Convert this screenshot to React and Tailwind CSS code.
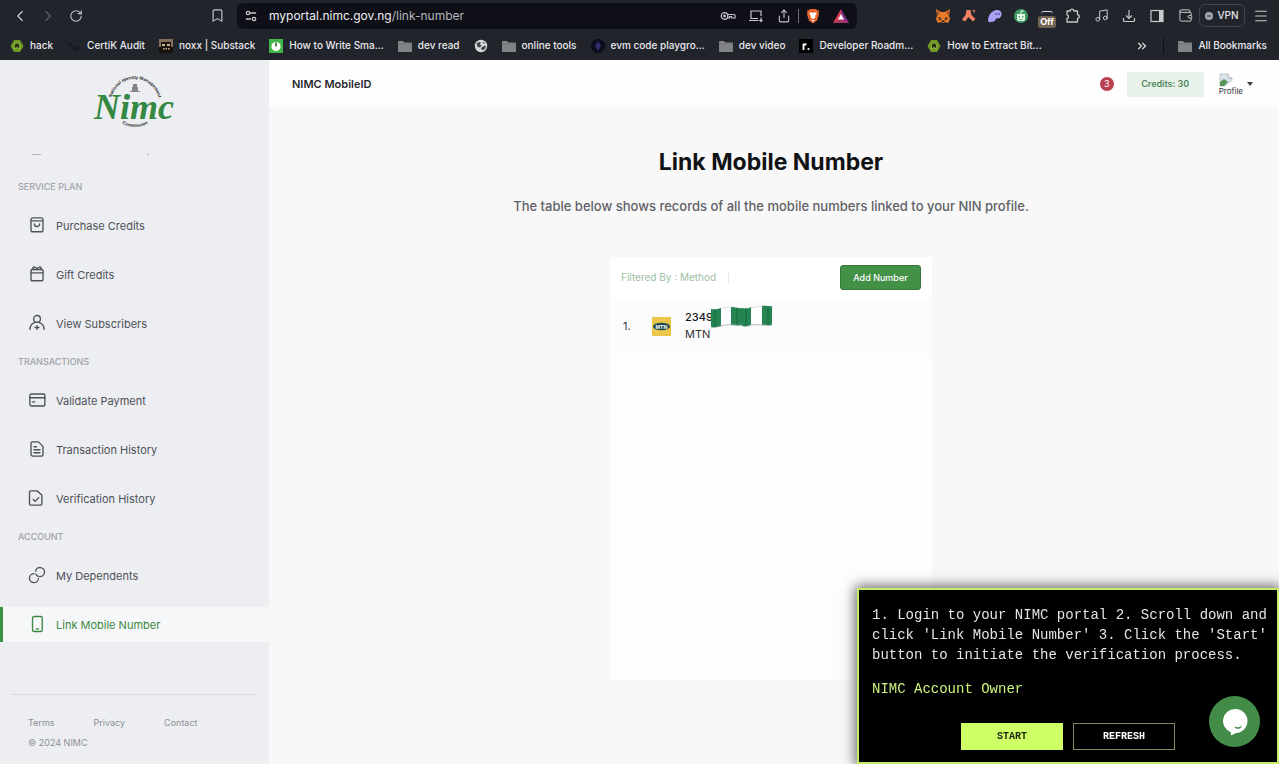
import React from 'react';
import {
  ChevronLeft, ChevronRight, RotateCw, Bookmark, Share, Music,
  Wallet, Menu, ChevronsRight,
} from 'lucide-react';

const stroke = { fill: 'none', stroke: 'currentColor', strokeWidth: 1.8, strokeLinecap: 'round', strokeLinejoin: 'round' };

function Icon({ children, className = 'size-[18px]' }) {
  return <svg viewBox="0 0 24 24" className={className} {...stroke} aria-hidden="true">{children}</svg>;
}

const icons = {
  bag: <><rect x="4" y="2.500" width="16" height="18.500" rx="2.500" /><path d="M4.500 6.500h15" /><path d="M8.500 10.500a3.500 3.500 0 0 0 7 0" /></>,
  gift: <><rect x="4" y="6" width="16" height="15" rx="1.500" /><path d="M4 10.500h16M12 6c-1-4-5-4-5.500-2-.3 1.300 1 2 2 2M12 6c1-4 5-4 5.500-2 .3 1.300-1 2-2 2" /></>,
  user: <><circle cx="12" cy="6.500" r="4.500" /><path d="M2.500 20.500c.3-5 3-8 6.500-9M21.500 20.500c-.3-5-3-8-6.500-9M12 15.500v5M9.500 18h5" /></>,
  card: <><rect x="2.500" y="4" width="20" height="16" rx="2" /><path d="M2.500 9h20M6 14.500h3" /></>,
  doc: <><path d="M6 2.500h8l6 6V19a2.500 2.500 0 0 1-2.500 2.500h-11A2.500 2.500 0 0 1 4 19V4.500a2 2 0 0 1 2-2Z" /><path d="M8 9h3.500M8 13h8M8 17h8" /></>,
  check: <><path d="M4 2.500h8l6.500 5.500v11.500a2 2 0 0 1-2 2H4a2 2 0 0 1-2-2v-15a2 2 0 0 1 2-2Z" /><path d="m7 14 2.500 2.500 5-5" /></>,
  link: <><path d="M10.100 7A6 6 0 1 1 15.500 14" /><path d="M8 10.200A6 6 0 1 0 13.900 17" /><path d="m10.500 11 3 3" /></>,
  phone: <><rect x="6" y="2" width="13" height="20" rx="2" /><path d="M11 18.500h3" /></>,
};

const sections = [
  { title: 'SERVICE PLAN', items: [['Purchase Credits', 'bag'], ['Gift Credits', 'gift'], ['View Subscribers', 'user']] },
  { title: 'TRANSACTIONS', items: [['Validate Payment', 'card'], ['Transaction History', 'doc'], ['Verification History', 'check']] },
  { title: 'ACCOUNT', items: [['My Dependents', 'link'], ['Link Mobile Number', 'phone']] },
];

const Folder = () => (
  <svg viewBox="0 0 14 14" className="size-3.5" aria-hidden="true">
    <path d="M0 3a1 1 0 0 1 1-1h4l1.500 1.500H13a1 1 0 0 1 1 1V12a1 1 0 0 1-1 1H1a1 1 0 0 1-1-1Z" fill="#838487" />
    <path d="M0 5h14" stroke="#6d6e71" strokeWidth=".6" />
  </svg>
);
const Hex = () => (
  <svg viewBox="0 0 14 14" className="size-3.5" aria-hidden="true">
    <path d="M4 1h6l3.500 6L10 13H4L.5 7Z" fill="#6f9a22" />
    <path d="M4.300 10V6.500a2.700 2.700 0 0 1 5.400 0V10L7 8.500Z" fill="#25320f" stroke="#a9cf58" strokeWidth=".8" />
  </svg>
);
const Audit = () => (
  <svg viewBox="0 0 14 14" className="size-3.5" aria-hidden="true">
    <path d="M2 4 8 11 12 8" fill="none" stroke="#1a1b21" strokeWidth="2.500" />
  </svg>
);
const Pixel = () => (
  <svg viewBox="0 0 14 14" className="size-3.5" aria-hidden="true">
    <path d="M0 0h14v14H0Z" fill="#17120e" />
    <path d="M0 0h14v3H0ZM0 3h2v5H0ZM12 3h2v5h-2Z" fill="#82705a" />
    <path d="M3 5h3v2H3ZM8 5h3v2H8ZM4 9h1.500v1.500H4ZM6.500 9H8v1.500H6.500ZM9 9h1.500v1.500H9Z" fill="#c9b48d" />
  </svg>
);
const Clock = () => (
  <svg viewBox="0 0 14 14" className="size-3.5" aria-hidden="true">
    <path d="M0 0h14v14H0Z" fill="#43b649" />
    <circle cx="7" cy="7.500" r="4.600" fill="#fff" />
    <path d="M7 3.500v4" stroke="#23702a" strokeWidth="1.600" />
  </svg>
);
const Evm = () => (
  <svg viewBox="0 0 14 14" className="size-3.5" aria-hidden="true">
    <circle cx="7" cy="7" r="7" fill="#0b0c1c" />
    <path d="m7 2 3 5-3 5-3-5Z" fill="#2e2f68" />
  </svg>
);
const Earth = () => (
  <svg viewBox="0 0 14 14" className="size-3.5" aria-hidden="true">
    <circle cx="7" cy="7" r="6.200" fill="#d6d7d9" />
    <path d="M2.500 4.500 5 3l2 .5-1 2 1.500 1L6 8.500 3.500 8ZM8 8l3-1.500 1 1-1.500 3-2.500.5-1-1.500ZM9 2.500l2 1.500-1.500 1Z" fill="#45474d" />
  </svg>
);
const Roadmap = () => (
  <svg viewBox="0 0 14 14" className="size-3.5" aria-hidden="true">
    <path d="M0 0h14v14H0Z" fill="#000" />
    <path d="M4.500 11V4.500M4.500 7.500c0-1.700 1.200-2.400 3-2.200" fill="none" stroke="#fff" strokeWidth="1.800" />
    <circle cx="9.500" cy="10" r="1.100" fill="#fff" />
  </svg>
);

const bookmarks = [
  [Hex, 'hack'], [Audit, 'CertiK Audit'], [Pixel, 'noxx | Substack'], [Clock, 'How to Write Sma...'],
  [Folder, 'dev read'], [Earth, ''], [Folder, 'online tools'], [Evm, 'evm code playgro...'],
  [Folder, 'dev video'], [Roadmap, 'Developer Roadm...'], [Hex, 'How to Extract Bit...'],
];

function ToolButton({ label, children }) {
  return <button type="button" aria-label={label} className="flex size-4 shrink-0 items-center justify-center">{children}</button>;
}

function BrowserBar() {
  return (
    <div className="bg-[#22242b] text-[#c7c8cc]">
      <div className="flex h-[31px] items-center">
        <div className="flex w-[237px] shrink-0 items-center gap-3 pl-3">
          <ToolButton label="Back"><ChevronLeft size={18} strokeWidth={1.700} className="shrink-0" /></ToolButton>
          <ToolButton label="Forward"><ChevronRight size={18} strokeWidth={1.700} className="shrink-0 text-[#5d5f66]" /></ToolButton>
          <ToolButton label="Reload"><RotateCw size={14} strokeWidth={1.900} /></ToolButton>
          <span className="flex-1" />
          <span className="pr-3">
            <ToolButton label="Bookmark"><Bookmark size={15} strokeWidth={1.800} /></ToolButton>
          </span>
        </div>
        <div className="flex h-[26px] min-w-0 flex-1 items-center rounded-md bg-[#0e0f17] px-2">
          <svg viewBox="0 0 14 14" className="mr-3 size-3 shrink-0" fill="none" stroke="currentColor" strokeWidth="1.500" aria-hidden="true">
            <circle cx="3.500" cy="3.500" r="2" /><path d="M6 3.500h7M1 10.500h6" /><circle cx="10.500" cy="10.500" r="2" />
          </svg>
          <div className="min-w-0 flex-1 truncate text-[12px] text-[#b5b6bb]"><span className="text-[#eeeef0]">myportal.nimc.gov.ng</span>/link-number</div>
          <div className="flex items-center gap-3">
            <ToolButton label="Passwords">
              <svg viewBox="0 0 16 16" className="size-4" fill="none" stroke="currentColor" strokeWidth="1.200"><circle cx="4.500" cy="8" r="3.300" /><circle cx="4.500" cy="8" r=".8" /><path d="M7.500 6.500H14a1 1 0 0 1 1 1V10h-3.500V8.500H9.500V10H7.500" /></svg>
            </ToolButton>
            <ToolButton label="Install app">
              <svg viewBox="0 0 16 16" className="size-4" fill="none" stroke="currentColor" strokeWidth="1.200"><path d="M13 8V3H3v7.500h7M1 12.500h9.500M13 9.500v4M11.500 12l1.500 1.500 1.500-1.500" /></svg>
            </ToolButton>
            <ToolButton label="Share"><Share size={14} strokeWidth={1.900} /></ToolButton>
          </div>
          <span className="mx-1.5 h-3.5 w-px bg-[#6d6e74]" />
          <div className="flex items-center gap-3">
            <ToolButton label="Shields">
              <svg viewBox="0 0 14 16" className="h-4 w-3.5"><path d="M4 1h6l1.200 1.300 1.800.3-.4 3 .4 1-2 6L7 15.500 3 12.600l-2-6 .4-1-.4-3 1.800-.3Z" fill="#e8642c" /><path d="m3 5 2.500-.7L7 5l1.500-.7L11 5 9 8l.5 1.500L7 11l-2.500-1.500L5 8Z" fill="#fff" /><path d="M5 12h4l-2 1.500Z" fill="#fff" /></svg>
            </ToolButton>
            <ToolButton label="Rewards">
              <svg viewBox="0 0 16 14" className="h-3.5 w-4"><path d="M8 0 0 14h8Z" fill="#d93d50" /><path d="m8 0 8 14H8Z" fill="#87308c" /><path d="M0 14h16l-8-4.500Z" fill="#a7346a" /><path d="m8 5 3 5.500H5Z" fill="#fff" /></svg>
            </ToolButton>
          </div>
        </div>
        <div className="flex shrink-0 items-center pl-[78px]">
          <div className="flex items-center gap-[10px]">
            <ToolButton label="Fox wallet">
              <svg viewBox="0 0 16 16" className="size-4"><path d="m1 1 5 3h4l5-3-1 7 1 3-2 4-3-1-2 1-2-1-3 1-2-4 1-3Z" fill="#e67c2c" /><path d="m2 2 3 3-3 3ZM14 2l-3 3 3 3Z" fill="#a95320" /><path d="m3 9 3 .5.500 3L4 12Zm10 0-3 .5-.5 3L12 12Z" fill="#6b3819" /><path d="M6.500 12.500h3L9 14H7Z" fill="#2c2523" /></svg>
            </ToolButton>
            <ToolButton label="Argent">
              <svg viewBox="0 0 16 16" className="size-4"><path d="M5.500 2h4l1 5 4 4-2.500 2.500L7.500 9 4 13.500 1 11.500 4.500 7Z" fill="#f08063" /><path d="M13 1.500v3M11.500 3h3" stroke="#f08063" strokeWidth=".8" /></svg>
            </ToolButton>
            <ToolButton label="Phantom">
              <svg viewBox="0 0 16 16" className="size-4"><path d="M1 13C1 7 5 2 10 2c4 0 5 3 4.500 5-.7 3-3 4-5 3-1 2.500-3 4.500-4.500 3.500-.7.6-3 1.500-4-.5Z" fill="#a9a1f4" /><path d="M9 5v2M12 5v2" stroke="#393377" /></svg>
            </ToolButton>
            <ToolButton label="Robot">
              <svg viewBox="0 0 16 16" className="size-4"><circle cx="8" cy="8" r="7" fill="#3e9b63" /><path d="M4 6h8v5a2 2 0 0 1-2 2H6a2 2 0 0 1-2-2Z" fill="#e5f6e8" /><path d="M8 6V3h3" stroke="#e5f6e8" fill="none" /><path d="M5.500 8H7v1.500H5.500ZM9 8h1.500v1.500H9ZM6 11h4v.8H6Z" fill="#5aaa78" /></svg>
            </ToolButton>
            <button type="button" className="flex h-6 w-4 flex-col items-center justify-end gap-0.5 text-[9px] leading-3 font-bold text-white">
              <span className="h-[3px] w-3 rounded-t-full border-t border-[#dedede]" />
              <span className="rounded-[3px] bg-[#736451] px-0.5">Off</span>
            </button>
            <ToolButton label="Extensions">
              <svg viewBox="0 0 16 16" className="size-4" fill="none" stroke="currentColor" strokeWidth="1.300" strokeLinejoin="round"><path d="M2 3h3.200a1.800 1.800 0 1 1 3.600 0H12.500v3.700a1.800 1.800 0 1 1 0 3.600V14H2v-3.500a1.900 1.900 0 0 0 0-3.700Z" /></svg>
            </ToolButton>
          </div>
          <div className="flex items-center gap-3 pl-3">
            <ToolButton label="Media"><Music size={15} strokeWidth={1.600} /></ToolButton>
            <ToolButton label="Downloads">
              <svg viewBox="0 0 16 16" className="size-4" fill="none" stroke="currentColor" strokeWidth="1.200"><path d="M8 2v8M5 7.500 8 10.500l3-3M2.500 10v2.500a1 1 0 0 0 1 1h9a1 1 0 0 0 1-1V10" /></svg>
            </ToolButton>
            <ToolButton label="Side panel">
              <svg viewBox="0 0 16 16" className="size-4"><rect x="2" y="2.500" width="12" height="11" fill="none" stroke="currentColor" strokeWidth="1.200" /><path d="M10 2.500h4v11h-4Z" fill="currentColor" /></svg>
            </ToolButton>
            <ToolButton label="Wallet"><Wallet size={15} strokeWidth={1.600} /></ToolButton>
          </div>
          <button type="button" className="ml-1.5 flex h-[23px] w-[46px] items-center justify-center gap-1 rounded-md border border-[#42444b] text-[10px] font-medium text-[#e4e4e6]">
            <svg viewBox="0 0 8 8" className="size-2"><circle cx="4" cy="4" r="4" fill="#a7a8ad" /><path d="M2 4h4" stroke="#22242b" /></svg>VPN
          </button>
          <span className="pr-2.5 pl-2"><ToolButton label="Menu"><Menu size={16} strokeWidth={1.600} /></ToolButton></span>
        </div>
      </div>
      <div className="flex h-[29px] items-center gap-3.5 pr-3 pl-2.5 text-[10px] font-medium text-[#e9e9eb]">
        {bookmarks.map(([Mark, label], i) => (
          <a key={i} href="#bookmark" aria-label={label || 'Website'} className="flex shrink-0 items-center gap-1.5">
            <Mark />
            {label && <span>{label}</span>}
          </a>
        ))}
        <span className="flex-1" />
        <button type="button" aria-label="More bookmarks"><ChevronsRight size={14} strokeWidth={2} /></button>
        <span className="h-4 w-px bg-[#0f1014]" />
        <a href="#all" className="flex shrink-0 items-center gap-1.5"><Folder />All Bookmarks</a>
      </div>
    </div>
  );
}

function Logo() {
  return (
    <svg viewBox="0 0 90 60" className="h-[60px] w-[90px]" role="img" aria-label="Nimc">
      <defs>
        <path id="arcTop" d="M21 31a24 24 0 0 1 48 0" />
        <path id="arcBottom" d="M20 30a25 25 0 0 0 50 0" />
      </defs>
      <text fontFamily="Liberation Sans, sans-serif" fontSize="4.500" fontWeight="700" fill="#29292e" textAnchor="middle">
        <textPath href="#arcTop" startOffset="50%">National Identity Management</textPath>
      </text>
      <path d="M43 12h4v3h1v4h2v1H40v-1h2v-4h1ZM35 22l5 1-1 5-5-1Z" fill="#858588" />
      <text x="4" y="47" fontFamily="Liberation Serif, serif" fontSize="36" fontWeight="700" fontStyle="italic" fill="#338842">Nimc</text>
      <text fontFamily="Liberation Sans, sans-serif" fontSize="4.500" fontWeight="700" fill="#29292e" textAnchor="middle">
        <textPath href="#arcBottom" startOffset="50%">Commission</textPath>
      </text>
    </svg>
  );
}

function Sidebar() {
  return (
    <aside className="flex w-[269px] shrink-0 flex-col bg-[#edeef1] text-[#4e5159]">
      <div className="flex h-[82px] justify-center pt-3"><Logo /></div>
      <div className="flex h-6 items-center justify-between pr-[120px] pl-8">
        <span className="h-px w-[9px] bg-[#b4b6ba]" /><span className="h-px w-0.5 bg-[#b4b6ba]" />
      </div>
      <nav>
        {sections.map((s) => (
          <section key={s.title}>
            <h2 className="flex h-[42px] items-center pl-[18px] text-[9px] font-medium text-[#a0a3a9]">{s.title}</h2>
            <ul className="flex flex-col gap-3.5">
              {s.items.map(([label, icon]) => {
                const active = icon === 'phone';
                return (
                  <li key={label}>
                    <a
                      href={'#' + icon}
                      aria-current={active ? 'page' : undefined}
                      className={'flex h-[35px] items-center gap-2.5 border-l-[3px] pt-0.5 pl-[25px] text-[11px] ' +
                        (active ? 'border-[#3d9145] bg-[#f6f7f9] text-[#3b8843]' : 'border-transparent')}
                    >
                      <span className="pb-1"><Icon>{icons[icon]}</Icon></span>
                      {label}
                    </a>
                  </li>
                );
              })}
            </ul>
          </section>
        ))}
      </nav>
      <footer className="mx-3 mt-[52px] border-t border-[#d7d9dd] pt-5 pl-4 text-[9px] leading-4 text-[#8c8f96]">
        <div className="flex gap-[39px]"><a href="#terms">Terms</a><a href="#privacy">Privacy</a><a href="#contact">Contact</a></div>
        <p className="mt-1">© 2024 NIMC</p>
      </footer>
    </aside>
  );
}

function Flag() {
  return (
    <svg viewBox="0 0 61 24" className="absolute -top-1 left-[26px] h-6 w-[61px]" aria-hidden="true">
      <path d="M0 4c7 2 12-2 21-2 5 0 8 2 11 1v17c-6 2-10-1-16 0-6 1-11 4-16 2Z" fill="#fff" stroke="#c6cbc8" strokeWidth=".6" />
      <path d="M31 3c8 2 12-2 21-2 3 0 6 1 9 0v19c-7 2-11-1-17 0-4 1-9 2-13 1Z" fill="#fff" stroke="#c6cbc8" strokeWidth=".6" />
      <path d="M0 4c4 1 7 0 10-1v18c-4 1-7 2-10 1ZM20 2c5 0 8 2 12 1v17c-4 1-8 0-12 0Z" fill="#258451" />
      <path d="M31 3c3 1 6 1 9-1v18c-3 1-6 2-9 1ZM51 1c4-1 6 1 10 0v19c-4 1-6 0-10 0Z" fill="#258451" />
      <path d="M10 21c8-3 13 0 22-1M40 20c6-2 13 1 21 0" fill="none" stroke="#aab1ae" strokeWidth=".7" />
      <path d="M4 4v18M26 3v17M35 3v17M57 1v19" stroke="#196b40" />
    </svg>
  );
}

function Portal() {
  return (
    <div className="flex min-w-0 flex-1 flex-col bg-[#f8f8f8]">
      <header className="flex h-[47px] items-center bg-[#fefefe] pt-px pr-[26px] pl-[23px]">
        <strong className="text-[11px] font-semibold text-[#26282d]">NIMC MobileID</strong>
        <span className="flex-1" />
        <span className="flex size-3.5 items-center justify-center rounded-full bg-[#b9404e] text-[9px] text-white">3</span>
        <span className="ml-[13px] flex h-[25px] w-[77px] items-center justify-center bg-[#e9f2ea] text-[9px] font-semibold text-[#50885a]">Credits: 30</span>
        <button type="button" className="ml-[15px] flex items-center gap-1">
          <span className="text-[8px] leading-none text-[#33353a]">
            <svg viewBox="0 0 14 14" className="block size-3.5" aria-hidden="true"><path d="M1 1h8l4 4v2L6 13H1Z" fill="#dbe4ee" stroke="#aeb3b7" strokeWidth=".7" /><path d="M9 1v4h4" fill="#fff" stroke="#aeb3b7" /><path d="M1 13V9l4-3 4 3-4 4Z" fill="#559557" /></svg>
            <span className="block">Profile</span>
          </span>
          <svg viewBox="0 0 6 4" className="h-1 w-1.5"><path d="M0 0h6L3 4Z" fill="#3b3d42" /></svg>
        </button>
      </header>
      <main className="flex flex-1 flex-col items-center pt-[39px] pr-1.5 pb-[84px]">
        <h1 className="text-[23px] leading-8 font-bold text-[#111214]">Link Mobile Number</h1>
        <p className="mt-[18px] text-[13px] leading-5 font-medium text-[#5f6167]">The table below shows records of all the mobile numbers linked to your NIN profile.</p>
        <section className="mt-[41px] flex w-full max-w-[322px] flex-1 flex-col bg-[#fdfdfd]">
          <div className="flex h-[41px] items-center bg-white pr-[11px] pl-[11px]">
            <span className="text-[10px] text-[#9cc0a0]">Filtered By : Method</span>
            <span className="ml-3 h-3 w-px bg-[#e9ebea]" />
            <span className="flex-1" />
            <button type="button" className="h-[25px] w-[81px] rounded-[3px] border border-[#36773b] bg-[#439047] text-[9px] font-medium text-white">Add Number</button>
          </div>
          <table className="w-full text-[11px] text-[#303237]">
            <tbody>
              <tr className="h-14 bg-[#fcfcfc]">
                <td className="w-[42px] pl-[13px]">1.</td>
                <td className="w-[33px]">
                  <svg viewBox="0 0 19 19" className="size-[19px]" role="img" aria-label="MTN logo"><path d="M0 0h19v19H0Z" fill="#ebc64b" /><ellipse cx="9.500" cy="9.500" rx="8.500" ry="3.800" fill="#20484c" /><text x="9.500" y="11.500" textAnchor="middle" fontFamily="Liberation Sans, sans-serif" fontWeight="700" fontSize="5.500" fill="#fff">MTN</text></svg>
                </td>
                <td className="leading-[17px]">
                  <span className="relative block font-medium text-[#17181b]">2349<Flag /></span>
                  MTN
                </td>
              </tr>
            </tbody>
          </table>
        </section>
      </main>
    </div>
  );
}

function Assistant() {
  return (
    <section className="fixed right-0 bottom-0 h-[176px] w-[422px] border-2 border-[#c3ee66] bg-black pt-[15px] pr-2 pl-[13px] font-['Liberation_Mono',monospace] text-[14px] leading-5 text-[#e4e4e4] shadow-[0_0_12px_2px_rgba(0,0,0,0.6)]">
      <p>1. Login to your NIMC portal 2. Scroll down and click 'Link Mobile Number' 3. Click the 'Start' button to initiate the verification process.</p>
      <p className="mt-3.5 text-[#cdf47c]">NIMC Account Owner</p>
      <div className="mt-6 flex gap-2.5 pl-[89px] text-[10px] font-bold">
        <button type="button" className="h-[27px] w-[102px] bg-[#ceff66] text-[#222a12]">START</button>
        <button type="button" className="h-[27px] w-[102px] border border-[#7f8c60] text-white">REFRESH</button>
      </div>
      <button type="button" aria-label="Open chat" className="absolute right-[17px] bottom-[15px] flex size-[51px] items-center justify-center rounded-full bg-[#438c48]">
        <svg viewBox="0 0 26 28" className="h-7 w-[26px]"><path d="M13 1a12 12 0 1 1 1 24l-5 2.500-.3-3.300A12 12 0 0 1 13 1Z" fill="#fff" /><path d="M12 18.500c3 1.500 6 .8 8-1-1 4-6 4.500-8 1Z" fill="#438c48" /></svg>
      </button>
    </section>
  );
}

export default function App() {
  return (
    <div className="flex min-h-screen flex-col font-['Inter',sans-serif]">
      <BrowserBar />
      <div className="flex flex-1"><Sidebar /><Portal /></div>
      <Assistant />
    </div>
  );
}
